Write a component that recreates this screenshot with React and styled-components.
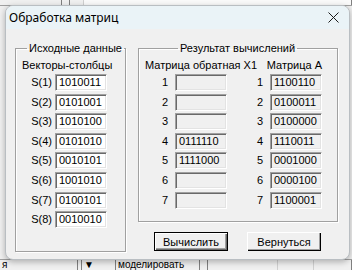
import React from "react";
import styled, { createGlobalStyle } from "styled-components";

const GlobalStyle = createGlobalStyle`
  * { box-sizing: border-box; }
  body {
    margin: 0;
    background: #f0f0f0;
    font-family: "Liberation Sans", Arial, sans-serif;
    font-size: 11px;
    color: #000;
  }
`;

const Desktop = styled.div`
  position: relative;
  width: 352px;
  height: 270px;
  overflow: hidden;
  background: #f0f0f0;
  display: flex;
  flex-direction: column;
  justify-content: space-between;
`;

const BgToolbar = styled.div`
  display: flex;
  height: 6px;
  border-bottom: 1px solid #a0a0a0;
`;

const BgCell = styled.div`
  width: ${(p) => p.$w}px;
  border-right: 1px solid ${(p) => (p.$light ? "#d0d0d0" : "#808080")};
  background: ${(p) => p.$bg || "transparent"};
  font-size: 10px;
  line-height: 10px;
  padding-left: 2px;
  white-space: nowrap;
`;

const BgStatus = styled.div`
  display: flex;
  height: 11px;
  border-top: 1px solid #a0a0a0;
  background: #f0f0f0;
`;

const Window = styled.div`
  position: absolute;
  left: 5px;
  top: 5px;
  width: 345px;
  height: 255px;
  border-radius: 8px;
  border: 1px solid #b9bec2;
  overflow: hidden;
  background: #f0f0f0;
  box-shadow: 0 2px 6px rgba(0, 0, 0, 0.28);
  display: flex;
  flex-direction: column;
`;

const TitleBar = styled.div`
  height: 23px;
  flex: none;
  background: #eaf3f7;
  display: flex;
  align-items: center;
  justify-content: space-between;
  padding: 0 8px 0 3px;
`;

const Title = styled.span`
  font-family: "Noto Sans", "Open Sans", sans-serif;
  font-size: 12px;
  color: #000;
`;

const CloseButton = styled.div`
  width: 16px;
  height: 16px;
  display: flex;
  align-items: center;
  justify-content: center;
`;

const Body = styled.div`
  flex: 1;
  display: flex;
  gap: 12px;
  padding: 13px 0 0 9px;
`;

const Group = styled.fieldset`
  margin: 0;
  width: ${(p) => p.$w}px;
  height: ${(p) => p.$h}px;
  min-width: 0;
  padding: 4px 0 0 6px;
  border: 1px solid #a0a0a0;
  box-shadow: inset 1px 1px 0 #fff, 1px 1px 0 #fff;
`;

const Legend = styled.legend`
  margin-left: ${(p) => p.$left}px;
  padding: 0 2px;
  line-height: 13px;
  white-space: nowrap;
`;

const Caption = styled.div`
  line-height: 13px;
  height: 13px;
  white-space: nowrap;
`;

const InputList = styled.div`
  display: flex;
  flex-direction: column;
  gap: 2.6px;
  margin-top: 2px;
`;

const Row = styled.div`
  display: flex;
  align-items: center;
  gap: 3px;
`;

const Label = styled.span`
  width: 30px;
  text-align: right;
  line-height: 13px;
`;

const Field = styled.div`
  width: 52px;
  height: 17px;
  line-height: 13px;
  white-space: nowrap;
  background: ${(p) => (p.$readOnly ? "#f0f0f0" : "#fff")};
  border-top: 1px solid #a0a0a0;
  border-left: 1px solid #a0a0a0;
  border-right: 1px solid #fff;
  border-bottom: 1px solid #fff;
  box-shadow: inset 1px 1px 0 #696969, inset -1px -1px 0 #e3e3e3;
  padding-top: 1px;
  padding-left: 3px;
`;

const RightColumn = styled.div`
  display: flex;
  flex-direction: column;
  gap: 10px;
`;

const ResultGrid = styled.div`
  display: grid;
  grid-template-columns: 24px 52px 31px 52px;
  column-gap: 6px;
  row-gap: 2.6px;
  align-items: center;
`;

const Header = styled.div`
  grid-column: ${(p) => p.$span};
  text-align: ${(p) => p.$align || "left"};
  line-height: 13px;
  white-space: nowrap;
  margin-bottom: -0.6px;
`;

const Num = styled.span`
  text-align: right;
  line-height: 13px;
  padding-right: 1px;
`;

const Buttons = styled.div`
  display: flex;
  gap: 19px;
  padding-left: 16px;
`;

const Button = styled.div`
  width: 74px;
  height: 19px;
  display: flex;
  align-items: center;
  justify-content: center;
  background: #f0f0f0;
  border: ${(p) => (p.$default ? "1px solid #000" : "none")};
  box-shadow: ${(p) =>
    p.$default
      ? "inset 1px 1px 0 #fff, inset -1px -1px 0 #696969, inset -2px -2px 0 #a0a0a0"
      : "inset 1px 1px 0 #fff, inset -1px -1px 0 #000, inset -2px -2px 0 #a0a0a0"};
`;

const vectors = ["1010011", "0101001", "1010100", "0101010", "0010101", "1001010", "0100101", "0010010"];
const inverse = ["", "", "", "0111110", "1111000", "", ""];
const matrixA = ["1100110", "0100011", "0100000", "1110011", "0001000", "0000100", "1100001"];

export default function App() {
  return (
    <Desktop>
      <GlobalStyle />
      <BgToolbar>
        <BgCell $w={62} />
        <BgCell $w={8} />
        <BgCell $w={14} $light />
        <BgCell $w={268} $bg="#fafafa" />
      </BgToolbar>
      <BgStatus>
        <BgCell $w={78}>я</BgCell>
        <BgCell $w={4} />
        <BgCell $w={34}>▼</BgCell>
        <BgCell $w={84}>моделировать</BgCell>
        <BgCell $w={8} />
        <BgCell $w={70} $light />
        <BgCell $w={36} $light />
        <BgCell $w={38} />
      </BgStatus>
      <Window>
        <TitleBar>
          <Title>Обработка матриц</Title>
          <CloseButton>
            <svg width="11" height="11" viewBox="0 0 11 11">
              <path d="M0.5 0.5 L10.5 10.5 M10.5 0.5 L0.5 10.5" stroke="#1a1a1a" strokeWidth="1" fill="none" />
            </svg>
          </CloseButton>
        </TitleBar>
        <Body>
          <Group $w={111} $h={210}>
            <Legend $left={5}>Исходные данные</Legend>
            <Caption>Векторы-столбцы</Caption>
            <InputList>
              {vectors.map((v, i) => (
                <Row key={i}>
                  <Label>S({i + 1})</Label>
                  <Field>{v}</Field>
                </Row>
              ))}
            </InputList>
          </Group>
          <RightColumn>
            <Group $w={200} $h={180}>
              <Legend $left={33}>Результат вычислений</Legend>
              <ResultGrid>
                <Header $span="1 / 3">Матрица обратная X1</Header>
                <Header $span="3 / 5" $align="right">Матрица А</Header>
                {matrixA.map((a, i) => (
                  <React.Fragment key={i}>
                    <Num>{i + 1}</Num>
                    <Field $readOnly>{inverse[i]}</Field>
                    <Num>{i + 1}</Num>
                    <Field $readOnly>{a}</Field>
                  </React.Fragment>
                ))}
              </ResultGrid>
            </Group>
            <Buttons>
              <Button $default>Вычислить</Button>
              <Button>Вернуться</Button>
            </Buttons>
          </RightColumn>
        </Body>
      </Window>
    </Desktop>
  );
}
